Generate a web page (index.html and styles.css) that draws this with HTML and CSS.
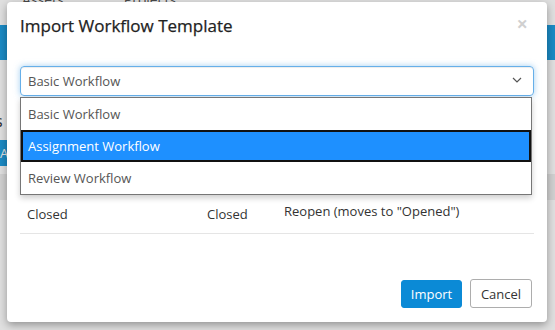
FILE: index.html
```html
<!DOCTYPE html>
<html lang="en">
<head>
  <meta charset="UTF-8" />
  <title>Import Workflow Template</title>
  <link rel="stylesheet" href="styles.css">
</head>
<body>
  <div class="page">
    <div class="topnav">
      <span>Assets</span>
      <span>Projects</span>
    </div>
    <div class="bluebar"></div>
    <div class="content">
      <div class="page-title">Workflow Templates</div>
      <div class="page-btn">Add</div>
      <div class="page-row"></div>
    </div>
  </div>

  <div class="backdrop"></div>

  <div class="modal">
    <div class="modal-header">
      <h4 class="modal-title">Import Workflow Template</h4>
      <span class="close">&times;</span>
    </div>
    <div class="modal-body">
      <div class="select">
        <span>Basic Workflow</span>
        <svg class="chevron" width="10" height="6" viewBox="0 0 10 6">
          <polyline points="1,1 5,5 9,1" fill="none" stroke="#555" stroke-width="1.2"/>
        </svg>
      </div>
      <table class="states">
        <tr><td>Closed</td><td>Closed</td><td class="action">Reopen (moves to "Opened")</td></tr>
      </table>
    </div>
    <div class="modal-footer">
      <button class="btn btn-primary">Import</button>
      <button class="btn btn-default">Cancel</button>
    </div>

    <ul class="dropdown">
      <li>Basic Workflow</li>
      <li class="active">Assignment Workflow</li>
      <li>Review Workflow</li>
    </ul>
  </div>
</body>
</html>
```

FILE: styles.css
```css
body {
  margin: 0;
  font-family: "Open Sans", sans-serif;
  font-size: 13px;
  color: #333;
  width: 555px;
  height: 330px;
  overflow: hidden;
  position: relative;
}

.page {
  background: #fff;
  height: 330px;
}

.topnav {
  height: 25px;
  display: flex;
  gap: 60px;
  padding-left: 22px;
  font-size: 14px;
  line-height: 0;
  color: #555;
}

.bluebar {
  height: 35px;
  background: #1f9ee0;
}

.content {
  padding: 50px 0 0;
}

.page-title {
  font-size: 16px;
  margin-left: -150px;
  height: 30px;
}

.page-btn {
  background: #1f9ee0;
  color: #fff;
  width: 60px;
  height: 26px;
  line-height: 26px;
  margin-left: -20px;
  padding-left: 20px;
}

.page-row {
  margin-top: 8px;
  height: 26px;
  background: #eee;
}

.backdrop {
  position: absolute;
  inset: 0;
  background: rgba(0, 0, 0, 0.12);
}

.modal {
  position: absolute;
  left: 7px;
  top: 2px;
  width: 540px;
  height: 320px;
  background: #fff;
  border-radius: 4px;
  box-shadow: 0 3px 8px rgba(0, 0, 0, 0.35);
  display: flex;
  flex-direction: column;
}

.modal-header {
  display: flex;
  justify-content: space-between;
  align-items: center;
  padding: 13px 13px;
}

.modal-title {
  margin: 0;
  font-size: 17px;
  font-weight: normal;
  line-height: 22px;
  color: #222;
  -webkit-text-stroke: 0.25px #222;
}

.close {
  font-size: 20px;
  font-weight: bold;
  color: #000;
  opacity: 0.18;
  line-height: 20px;
  margin-right: 6px;
  margin-top: -4px;
}

.modal-body {
  padding: 16px 13px 0;
  flex: 1;
}

.select {
  height: 30px;
  box-sizing: border-box;
  border: 1px solid #66afe9;
  border-radius: 4px;
  box-shadow: inset 0 1px 1px rgba(0, 0, 0, 0.075), 0 0 6px rgba(102, 175, 233, 0.6);
  display: flex;
  align-items: center;
  justify-content: space-between;
  padding: 0 11px 0 7px;
  color: #555;
}

.chevron {
  margin-top: -2px;
}

.states {
  width: 100%;
  border-collapse: collapse;
  margin-top: 104px;
}

.states td {
  text-align: left;
  vertical-align: top;
  line-height: 18px;
  padding: 5px 7px 10px;
  border-bottom: 1px solid #e5e5e5;
}

.states td:first-child { width: 166px; }
.states td:nth-child(2) { width: 63px; }

.states td.action {
  padding-top: 2px;
  padding-bottom: 13px;
}

.modal-footer {
  display: flex;
  justify-content: flex-end;
  gap: 8px;
  padding: 0 15px 14px;
}

.btn {
  font-family: "Open Sans", sans-serif;
  font-size: 13px;
  height: 29px;
  border-radius: 3px;
  padding: 0;
  cursor: pointer;
}

.btn-primary {
  background: #0b8ad6;
  border: 1px solid #0b8ad6;
  color: #fff;
  width: 61px;
  height: 28px;
  margin-top: 1px;
}

.btn-default {
  background: #fff;
  border: 1px solid #adadad;
  color: #333;
  width: 62px;
}

.dropdown {
  position: absolute;
  left: 13px;
  top: 95px;
  width: 512px;
  margin: 0;
  padding: 0;
  list-style: none;
  box-sizing: border-box;
  border: 1px solid #767676;
  background: #fff;
  box-shadow: 0 3px 6px rgba(0, 0, 0, 0.2);
}

.dropdown li {
  box-sizing: border-box;
  height: 32px;
  line-height: 32px;
  padding-left: 7px;
  color: #555;
}

.dropdown li.active {
  background: #1e90ff;
  color: #fff;
  border: 2px solid #111;
  line-height: 28px;
  padding-left: 5px;
}
```
